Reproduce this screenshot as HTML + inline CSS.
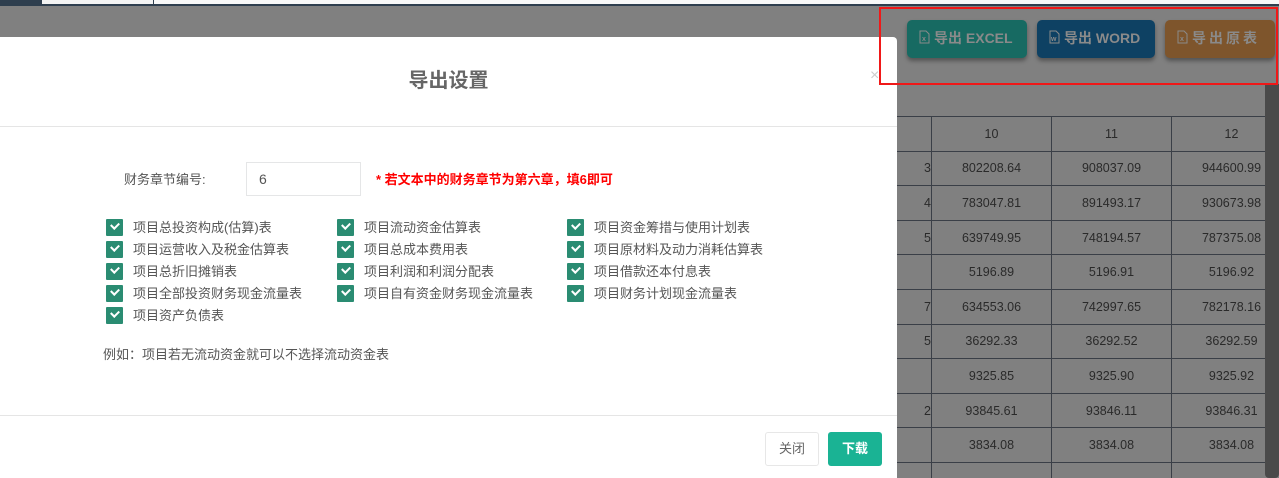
<!DOCTYPE html>
<html><head><meta charset="utf-8"><style>
*{margin:0;padding:0;box-sizing:border-box}
html,body{width:1279px;height:478px;overflow:hidden}
body{position:relative;background:#808080;font-family:"Liberation Sans","Noto Sans CJK SC",sans-serif}
.abs{position:absolute}
.btn{position:absolute;top:20px;height:38px;border-radius:5px;color:#8a8a8a;font-weight:bold;font-size:14px;line-height:36px;padding-left:27px;box-shadow:0 3px 4px rgba(0,0,0,.35)}
.btn svg{position:absolute;left:12px;top:10px}
table{position:absolute;left:811px;top:116px;border-collapse:collapse;table-layout:fixed;width:481px}
td{border:1px solid #3a3f47;width:120px;height:34.6px;padding:0;text-align:center;font-size:12.5px;color:#2a2a2a;overflow:hidden;white-space:nowrap}
.modal{position:absolute;left:0;top:37px;width:897px;height:441px;background:#fff;border-radius:0 4px 0 0}
.cb{position:absolute;font-size:13px;color:#555;padding-left:27px;line-height:18px}
.cb:before{content:"";position:absolute;left:0;top:0;width:17px;height:17px;background:#2a8c72;border-radius:1px}
.cb:after{content:"";position:absolute;left:5px;top:3px;width:6px;height:4px;border-left:2px solid #fff;border-bottom:2px solid #fff;transform:rotate(-45deg)}
</style></head><body>
<div class="abs" style="left:0;top:0;width:1279px;height:5px;background:#2e3e4e"></div>
<div class="abs" style="left:42px;top:0;width:111px;height:4px;background:#f3f3f3"></div>
<div class="abs" style="left:154px;top:0;width:1125px;height:4px;background:#f8f8f8"></div>
<div class="abs" style="left:0;top:4px;width:1279px;height:2px;background:#2e3e4e"></div>

<table>
<colgroup><col style="width:120px"><col style="width:120px"><col style="width:120px"><col style="width:120px"></colgroup>
<tr><td></td><td>10</td><td>11</td><td>12</td></tr>
<tr><td style="text-align:right">3</td><td>802208.64</td><td>908037.09</td><td>944600.99</td></tr>
<tr><td style="text-align:right">4</td><td>783047.81</td><td>891493.17</td><td>930673.98</td></tr>
<tr><td style="text-align:right">5</td><td>639749.95</td><td>748194.57</td><td>787375.08</td></tr>
<tr><td></td><td>5196.89</td><td>5196.91</td><td>5196.92</td></tr>
<tr><td style="text-align:right">7</td><td>634553.06</td><td>742997.65</td><td>782178.16</td></tr>
<tr><td style="text-align:right">5</td><td>36292.33</td><td>36292.52</td><td>36292.59</td></tr>
<tr><td></td><td>9325.85</td><td>9325.90</td><td>9325.92</td></tr>
<tr><td style="text-align:right">2</td><td>93845.61</td><td>93846.11</td><td>93846.31</td></tr>
<tr><td></td><td>3834.08</td><td>3834.08</td><td>3834.08</td></tr>
<tr><td></td><td></td><td></td><td></td></tr>
</table>
<div class="abs" style="left:1265px;top:84px;width:14px;height:394px;background:#4a4a4a;border-radius:0 0 4px 4px"></div>

<div class="btn" style="left:907px;width:120px;background:#176a62">
<svg width="11" height="14" viewBox="0 0 11 14"><path d="M1 1h6l3 3v9H1z" fill="none" stroke="#8a8a8a"/><text x="3" y="11" font-size="7" fill="#8a8a8a">x</text></svg>导出 EXCEL</div>
<div class="btn" style="left:1037px;width:118px;background:#0e4163">
<svg width="11" height="14" viewBox="0 0 11 14"><path d="M1 1h6l3 3v9H1z" fill="none" stroke="#8a8a8a"/><text x="2" y="11" font-size="7" fill="#8a8a8a">w</text></svg>导出 WORD</div>
<div class="btn" style="left:1165px;width:110px;background:#7e552c;letter-spacing:3px">
<svg width="11" height="14" viewBox="0 0 11 14"><path d="M1 1h6l3 3v9H1z" fill="none" stroke="#8a8a8a"/><text x="3" y="11" font-size="7" fill="#8a8a8a">x</text></svg>导出原表</div>

<div class="modal">
<div class="abs" style="left:0;top:0;width:897px;height:90px;border-bottom:1px solid #e5e5e5;text-align:center;line-height:88px;font-size:20px;font-weight:bold;color:#666">导出设置</div>
<div class="abs" style="left:870px;top:30px;color:#ccc;font-size:16px">×</div>
<div class="abs" style="left:124px;top:132px;font-size:13px;color:#555">财务章节编号:</div>
<div class="abs" style="left:246px;top:125px;width:115px;height:34px;border:1px solid #e5e6e7;font-size:14px;color:#555;padding-left:12px;line-height:32px">6</div>
<div class="abs" style="left:376px;top:132px;font-size:13px;color:#f00;font-weight:bold">* 若文本中的财务章节为第六章，填6即可</div>
<div class="cb" style="left:106px;top:182px">项目总投资构成(估算)表</div>
<div class="cb" style="left:337px;top:182px">项目流动资金估算表</div>
<div class="cb" style="left:567px;top:182px">项目资金筹措与使用计划表</div>
<div class="cb" style="left:106px;top:204px">项目运营收入及税金估算表</div>
<div class="cb" style="left:337px;top:204px">项目总成本费用表</div>
<div class="cb" style="left:567px;top:204px">项目原材料及动力消耗估算表</div>
<div class="cb" style="left:106px;top:226px">项目总折旧摊销表</div>
<div class="cb" style="left:337px;top:226px">项目利润和利润分配表</div>
<div class="cb" style="left:567px;top:226px">项目借款还本付息表</div>
<div class="cb" style="left:106px;top:248px">项目全部投资财务现金流量表</div>
<div class="cb" style="left:337px;top:248px">项目自有资金财务现金流量表</div>
<div class="cb" style="left:567px;top:248px">项目财务计划现金流量表</div>
<div class="cb" style="left:106px;top:270px">项目资产负债表</div>
<div class="abs" style="left:103px;top:307px;font-size:13px;color:#555">例如：项目若无流动资金就可以不选择流动资金表</div>
<div class="abs" style="left:0;top:378px;width:897px;height:1px;background:#e5e5e5"></div>
<div class="abs" style="left:765px;top:395px;width:54px;height:34px;border:1px solid #e7e7e7;border-radius:3px;text-align:center;line-height:32px;font-size:13px;color:#666">关闭</div>
<div class="abs" style="left:828px;top:395px;width:54px;height:34px;background:#1ab394;border-radius:3px;text-align:center;line-height:34px;font-size:13px;color:#fff;font-weight:bold">下载</div>
</div>

<div class="abs" style="left:879px;top:7px;width:399px;height:78px;border:2px solid #f01818"></div>
</body></html>
